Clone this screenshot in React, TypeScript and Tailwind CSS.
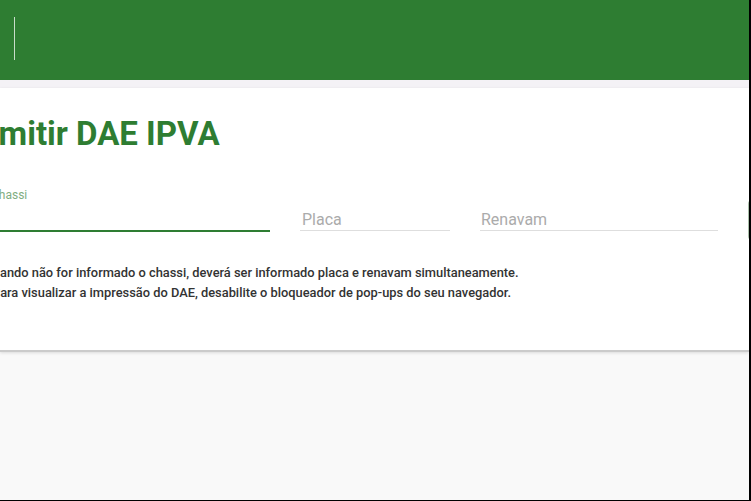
import React from "react";

export default function App() {
  return (
    <div
      className="w-[751px] h-[501px] overflow-hidden bg-[#f9f9f9] border-r-2 border-b border-black box-border flex flex-col"
      style={{ fontFamily: "Roboto, 'Liberation Sans', sans-serif" }}
    >
      <header className="h-[80px] shrink-0 bg-[#2e7d32] flex items-start">
        <div className="ml-[14px] mt-[17px] w-px h-[43px] bg-[#c9dcca]" />
      </header>
      <div className="h-[8px] shrink-0 bg-[#f4f2f6]" />
      <main className="h-[264px] shrink-0 bg-white border-b-2 border-[#cbcbcb] shadow-[0_1px_3px_rgba(0,0,0,0.12)]">
        <div className="-ml-[17px] pt-[27px] flex flex-col">
          <h1 className="-ml-[3px] text-[33px] leading-[38px] font-bold text-[#2e7d32] whitespace-nowrap">
            Emitir DAE IPVA
          </h1>
          <div className="mt-[34px] flex items-start gap-[30px]">
            <div className="w-[287px] shrink-0 flex flex-col">
              <label className="ml-[8px] text-[12px] leading-[16px] text-[#7fae82]">
                Chassi
              </label>
              <div className="h-[27px]" />
              <div className="h-[2px] bg-[#2e7d32]" />
            </div>
            <div className="w-[150px] shrink-0 flex flex-col">
              <div className="h-[16px]" />
              <input
                placeholder="Placa"
                className="w-full h-[28px] pt-[6px] px-[2px] text-[16px] leading-[20px] outline-none placeholder:text-[#ababab] border-b border-[#dedede] bg-transparent"
              />
            </div>
            <div className="w-[238px] shrink-0 flex flex-col">
              <div className="h-[16px]" />
              <input
                placeholder="Renavam"
                className="w-full h-[28px] pt-[6px] px-[1px] text-[16px] leading-[20px] outline-none placeholder:text-[#ababab] border-b border-[#dedede] bg-transparent"
              />
            </div>
            <div className="mt-[13px] w-[40px] h-[40px] bg-[#a9bfa9] rounded-sm shrink-0" />
          </div>
          <div className="mt-[23px] text-[12.85px] leading-[20px] font-medium text-[#333333] whitespace-nowrap">
            <p className="ml-[1px]">
              Quando não for informado o chassi, deverá ser informado placa e renavam simultaneamente.
            </p>
            <p className="ml-[9px]">
              Para visualizar a impressão do DAE, desabilite o bloqueador de pop-ups do seu navegador.
            </p>
          </div>
        </div>
      </main>
    </div>
  );
}
